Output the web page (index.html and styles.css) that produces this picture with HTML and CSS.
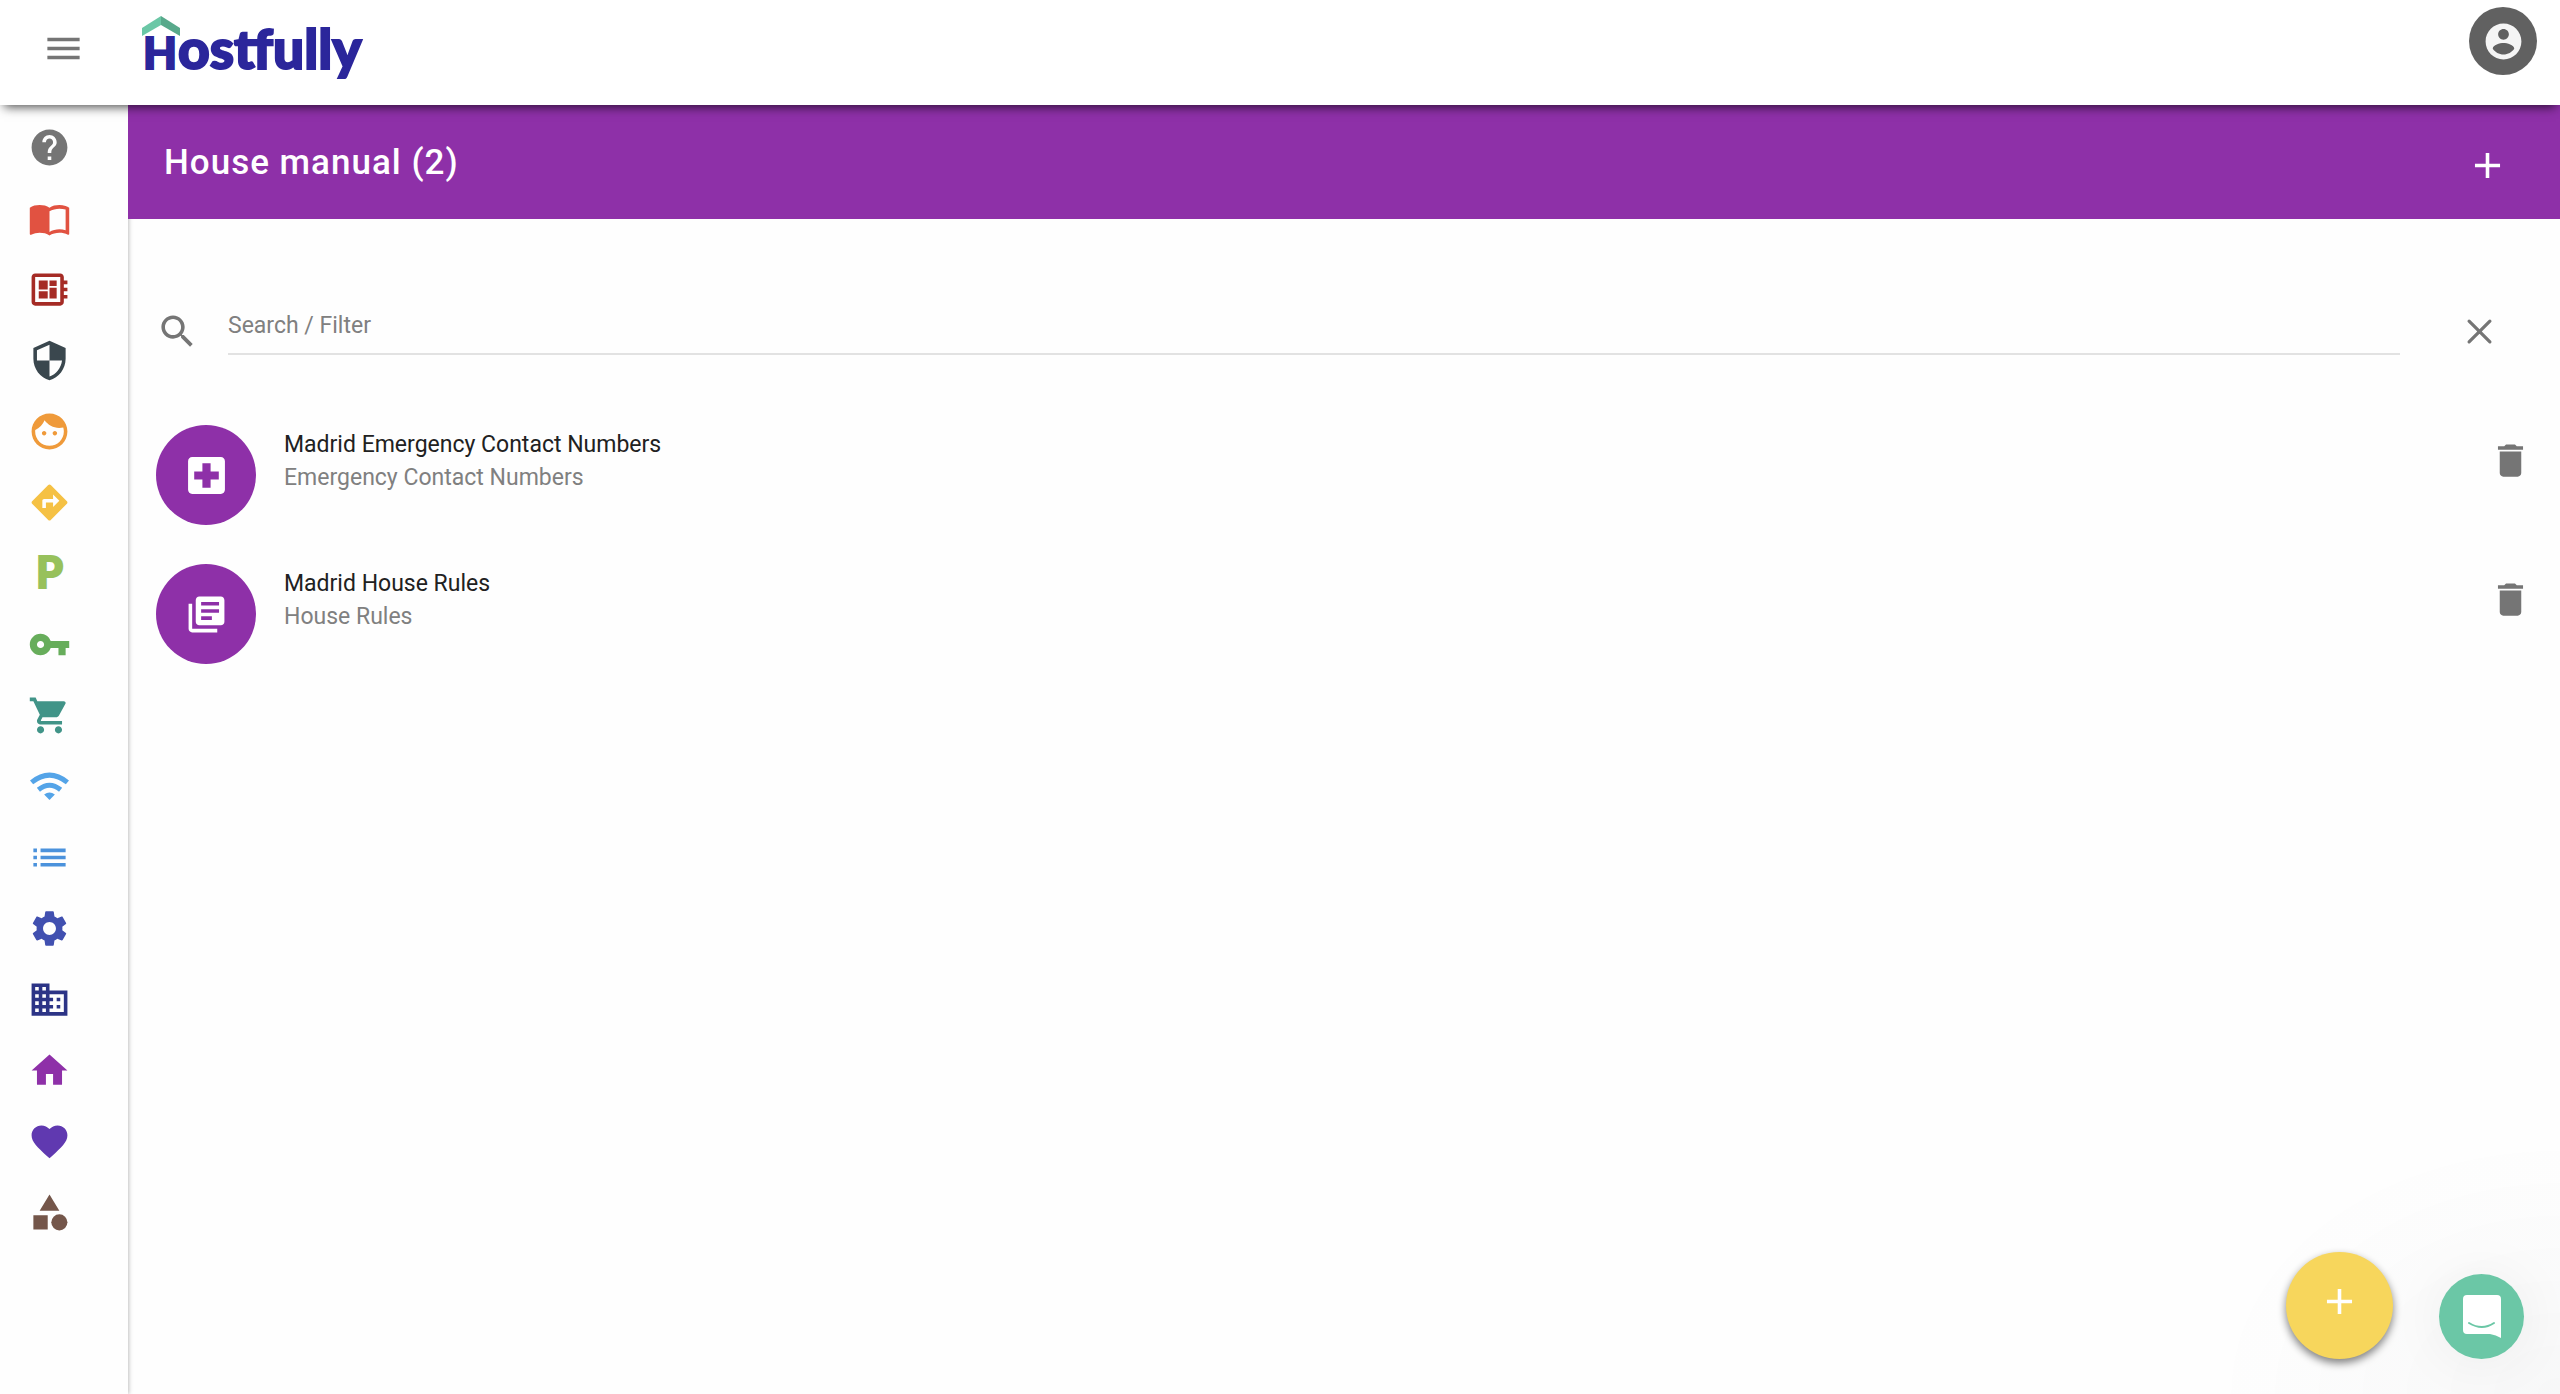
FILE: index.html
```html
<!DOCTYPE html>
<html lang="en">
<head>
  <meta charset="UTF-8">
  <meta name="viewport" content="width=device-width, initial-scale=1.0">
  <title>House manual - Hostfully</title>
  <link rel="stylesheet" href="styles.css">
</head>
<body>
  <header class="topbar">
    <button class="icon-btn menu-btn" aria-label="Menu">
      <svg class="icon" viewBox="0 0 24 24"><path d="M3 18h18v-2H3v2zm0-5h18v-2H3v2zm0-7v2h18V6H3z"/></svg>
    </button>
    <a class="logo" href="#" aria-label="Hostfully">
      <svg width="236" height="96" viewBox="0 0 236 96">
        <path fill="#6bc7a6" d="M0 28l19-12v9L0 36z"/>
        <path fill="#58a98b" d="M38 28L19 16v9l19 11z"/>
        <text class="logo-text" y="69"><tspan x="1" font-size="44">H</tspan><tspan x="36" font-size="55">ostfully</tspan></text>
      </svg>
    </a>
    <button class="avatar" aria-label="Account">
      <svg class="icon" viewBox="0 0 24 24"><path d="M12 2C6.48 2 2 6.48 2 12s4.48 10 10 10 10-4.48 10-10S17.52 2 12 2zm0 3c1.66 0 3 1.34 3 3s-1.34 3-3 3-3-1.34-3-3 1.34-3 3-3zm0 14.2c-2.5 0-4.71-1.28-6-3.22.03-1.99 4-3.08 6-3.08 1.99 0 5.97 1.09 6 3.08-1.29 1.94-3.5 3.22-6 3.22z"/></svg>
    </button>
  </header>

  <div class="layout">
    <nav class="sidebar">
      <a href="#" class="help" aria-label="Help"><svg class="icon" viewBox="0 0 24 24"><path d="M12 2C6.48 2 2 6.48 2 12s4.48 10 10 10 10-4.48 10-10S17.52 2 12 2zm1 17h-2v-2h2v2zm2.07-7.75l-.9.92C13.45 12.9 13 13.5 13 15h-2v-.5c0-1.1.45-2.1 1.17-2.83l1.24-1.26c.37-.36.59-.86.59-1.41 0-1.1-.9-2-2-2s-2 .9-2 2H8c0-2.21 1.79-4 4-4s4 1.79 4 4c0 .88-.36 1.68-.93 2.25z"/></svg></a>
      <a href="#" class="guide" aria-label="Guidebooks"><svg class="icon" viewBox="0 0 24 24"><path d="M21 5c-1.11-.35-2.33-.5-3.5-.5-1.95 0-4.05.4-5.5 1.5-1.45-1.1-3.55-1.5-5.5-1.5S2.45 4.9 1 6v14.65c0 .25.25.5.5.5.1 0 .15-.05.25-.05C3.1 20.45 5.05 20 6.5 20c1.95 0 4.05.4 5.5 1.5 1.35-.85 3.8-1.5 5.5-1.5 1.65 0 3.35.3 4.75 1.05.1.05.15.05.25.05.25 0 .5-.25.5-.5V6c-.6-.45-1.25-.75-2-1zm0 13.5c-1.1-.35-2.3-.5-3.5-.5-1.7 0-4.15.65-5.5 1.5V8c1.35-.85 3.8-1.5 5.5-1.5 1.2 0 2.4.15 3.5.5v11.5z"/></svg></a>
      <a href="#" class="board" aria-label="Dashboard"><svg class="icon" viewBox="0 0 24 24"><path d="M22 9V7h-2V5c0-1.1-.9-2-2-2H4c-1.1 0-2 .9-2 2v14c0 1.1.9 2 2 2h14c1.1 0 2-.9 2-2v-2h2v-2h-2v-2h2v-2h-2V9h2zm-4 10H4V5h14v14zM6 13h5v4H6zm6-6h4v3h-4zM6 7h5v5H6zm6 4h4v6h-4z"/></svg></a>
      <a href="#" class="safety" aria-label="Safety"><svg class="icon" viewBox="0 0 24 24"><path d="M12 1L3 5v6c0 5.55 3.84 10.74 9 12 5.16-1.26 9-6.45 9-12V5l-9-4zm0 10.99h7c-.53 4.12-3.28 7.79-7 8.94V12H5V6.3l7-3.11v8.8z"/></svg></a>
      <a href="#" class="host" aria-label="Host"><svg class="icon" viewBox="0 0 24 24"><path d="M9 11.75c-.69 0-1.25.56-1.25 1.25s.56 1.25 1.25 1.25 1.25-.56 1.25-1.25-.56-1.25-1.25-1.25zm6 0c-.69 0-1.25.56-1.25 1.25s.56 1.25 1.25 1.25 1.25-.56 1.25-1.25-.56-1.25-1.25-1.25zM12 2C6.48 2 2 6.48 2 12s4.48 10 10 10 10-4.48 10-10S17.52 2 12 2zm0 18c-4.41 0-8-3.59-8-8 0-.29.02-.58.05-.86 2.36-1.05 4.23-2.98 5.21-5.37C11.07 8.33 14.05 10 17.42 10c.78 0 1.53-.09 2.25-.26.21.71.33 1.47.33 2.26 0 4.41-3.59 8-8 8z"/></svg></a>
      <a href="#" class="directions" aria-label="Directions"><svg class="icon" viewBox="0 0 24 24"><path d="M21.71 11.29l-9-9c-.39-.39-1.02-.39-1.41 0l-9 9c-.39.39-.39 1.02 0 1.41l9 9c.39.39 1.02.39 1.41 0l9-9c.39-.38.39-1.01 0-1.41zM14 14.5V12h-4v3H8v-4c0-.55.45-1 1-1h5V7.5l3.5 3.5-3.5 3.5z"/></svg></a>
      <a href="#" class="parking" aria-label="Parking">P</a>
      <a href="#" class="checkin" aria-label="Check-in"><svg class="icon" viewBox="0 0 24 24"><path d="M12.65 10C11.83 7.67 9.61 6 7 6c-3.31 0-6 2.69-6 6s2.69 6 6 6c2.61 0 4.83-1.67 5.65-4H17v4h4v-4h2v-4H12.65zM7 14c-1.1 0-2-.9-2-2s.9-2 2-2 2 .9 2 2-.9 2-2 2z"/></svg></a>
      <a href="#" class="shop" aria-label="Marketplace"><svg class="icon" viewBox="0 0 24 24"><path d="M7 18c-1.1 0-1.99.9-1.99 2S5.9 22 7 22s2-.9 2-2-.9-2-2-2zM1 2v2h2l3.6 7.59-1.35 2.45c-.16.28-.25.61-.25.96 0 1.1.9 2 2 2h12v-2H7.42c-.14 0-.25-.11-.25-.25l.03-.12.9-1.63h7.45c.75 0 1.41-.41 1.75-1.03l3.58-6.49c.08-.14.12-.31.12-.48 0-.55-.45-1-1-1H5.21l-.94-2H1zm16 16c-1.1 0-1.99.9-1.99 2s.89 2 1.99 2 2-.9 2-2-.9-2-2-2z"/></svg></a>
      <a href="#" class="wifi" aria-label="Wifi"><svg class="icon" viewBox="0 0 24 24"><path fill="none" stroke="currentColor" stroke-width="2.8" d="M2 9.700Q12 1.600 22 9.700M5.800 13.800Q12 8.800 18.200 13.800"/><path d="M9 16.400Q12 14.200 15 16.400L12 19.500z"/></svg></a>
      <a href="#" class="list-link" aria-label="Lists"><svg class="icon" viewBox="0 0 24 24"><path d="M3 13h2v-2H3v2zm0 4h2v-2H3v2zm0-8h2V7H3v2zm4 4h14v-2H7v2zm0 4h14v-2H7v2zM7 7v2h14V7H7z"/></svg></a>
      <a href="#" class="settings" aria-label="Settings"><svg class="icon" viewBox="0 0 24 24"><path d="M19.14 12.94c.04-.3.06-.61.06-.94 0-.32-.02-.64-.07-.94l2.03-1.58c.18-.14.23-.41.12-.61l-1.92-3.32c-.12-.22-.37-.29-.59-.22l-2.39.96c-.5-.38-1.03-.7-1.62-.94l-.36-2.54c-.04-.24-.24-.41-.48-.41h-3.84c-.24 0-.43.17-.47.41l-.36 2.54c-.59.24-1.13.57-1.62.94l-2.39-.96c-.22-.08-.47 0-.59.22L2.74 8.87c-.12.21-.08.47.12.61l2.03 1.58c-.05.3-.09.63-.09.94s.02.64.07.94l-2.03 1.58c-.18.14-.23.41-.12.61l1.92 3.32c.12.22.37.29.59.22l2.39-.96c.5.38 1.03.7 1.62.94l.36 2.54c.05.24.24.41.48.41h3.84c.24 0 .44-.17.47-.41l.36-2.54c.59-.24 1.13-.56 1.62-.94l2.39.96c.22.08.47 0 .59-.22l1.92-3.32c.12-.22.07-.47-.12-.61l-2.01-1.58zM12 15.6c-1.98 0-3.6-1.62-3.6-3.6s1.62-3.6 3.6-3.6 3.6 1.62 3.6 3.6-1.62 3.6-3.6 3.6z"/></svg></a>
      <a href="#" class="business" aria-label="Properties"><svg class="icon" viewBox="0 0 24 24"><path d="M12 7V3H2v18h20V7H12zM6 19H4v-2h2v2zm0-4H4v-2h2v2zm0-4H4V9h2v2zm0-4H4V5h2v2zm4 12H8v-2h2v2zm0-4H8v-2h2v2zm0-4H8V9h2v2zm0-4H8V5h2v2zm10 12h-8v-2h2v-2h-2v-2h2v-2h-2V9h8v10zm-2-8h-2v2h2v-2zm0 4h-2v2h2v-2z"/></svg></a>
      <a href="#" class="home" aria-label="House manual"><svg class="icon" viewBox="0 0 24 24"><path d="M10 20v-6h4v6h5v-8h3L12 3 2 12h3v8z"/></svg></a>
      <a href="#" class="favorite" aria-label="Recommendations"><svg class="icon" viewBox="0 0 24 24"><path d="M12 21.35l-1.45-1.32C5.4 15.36 2 12.28 2 8.5 2 5.42 4.42 3 7.5 3c1.74 0 3.41.81 4.5 2.09C13.09 3.81 14.76 3 16.5 3 19.58 3 22 5.42 22 8.5c0 3.78-3.4 6.86-8.55 11.54L12 21.35z"/></svg></a>
      <a href="#" class="category" aria-label="Categories"><svg class="icon" viewBox="0 0 24 24"><path d="M12 2l-5.5 9h11zM3 13.5h8v8H3z"/><circle cx="17.5" cy="17.5" r="4.5"/></svg></a>
    </nav>

    <main class="content">
      <div class="titlebar">
        <h1>House manual (2)</h1>
        <button class="icon-btn" aria-label="Add">
          <svg class="icon" viewBox="0 0 24 24"><path d="M19 13h-6v6h-2v-6H5v-2h6V5h2v6h6v2z"/></svg>
        </button>
      </div>

      <form class="search">
        <label for="search" aria-label="Search">
          <svg class="icon" viewBox="0 0 24 24"><path d="M15.5 14h-.79l-.28-.27C15.41 12.59 16 11.11 16 9.5 16 5.91 13.09 3 9.5 3S3 5.91 3 9.5 5.91 16 9.5 16c1.61 0 3.09-.59 4.23-1.57l.27.28v.79l5 4.99L20.49 19l-4.99-5zm-6 0C7.01 14 5 11.99 5 9.5S7.01 5 9.5 5 14 7.01 14 9.5 11.99 14 9.5 14z"/></svg>
        </label>
        <input type="text" id="search" placeholder="Search / Filter">
        <button type="reset" class="icon-btn" aria-label="Clear">
          <svg class="icon" viewBox="0 0 24 24"><path fill="none" stroke="currentColor" stroke-width="1.8" stroke-linecap="round" d="M6.200 6.200l11.600 11.600M17.800 6.200L6.200 17.800"/></svg>
        </button>
      </form>

      <ul class="manual-list">
        <li class="manual">
          <div class="manual-icon">
            <svg class="icon" viewBox="1.5 1.5 21 21"><path d="M19 3H5c-1.1 0-2 .9-2 2v14c0 1.1.9 2 2 2h14c1.1 0 2-.9 2-2V5c0-1.1-.9-2-2-2zm-1 11h-4v4h-4v-4H6v-4h4V6h4v4h4v4z"/></svg>
          </div>
          <div class="manual-text">
            <h3>Madrid Emergency Contact Numbers</h3>
            <p>Emergency Contact Numbers</p>
          </div>
          <button class="icon-btn" aria-label="Delete Madrid Emergency Contact Numbers">
            <svg class="icon" viewBox="0 0 24 24"><path d="M6 19c0 1.1.9 2 2 2h8c1.1 0 2-.9 2-2V7H6v12zM19 4h-3.5l-1-1h-5l-1 1H5v2h14V4z"/></svg>
          </button>
        </li>
        <li class="manual">
          <div class="manual-icon">
            <svg class="icon" viewBox="0 0 24 24"><path d="M4 6H2v14c0 1.1.9 2 2 2h14v-2H4V6zm16-4H8c-1.1 0-2 .9-2 2v12c0 1.1.9 2 2 2h12c1.1 0 2-.9 2-2V4c0-1.1-.9-2-2-2zm-1 9H9V9h10v2zm-4 4H9v-2h6v2zm4-8H9V5h10v2z"/></svg>
          </div>
          <div class="manual-text">
            <h3>Madrid House Rules</h3>
            <p>House Rules</p>
          </div>
          <button class="icon-btn" aria-label="Delete Madrid House Rules">
            <svg class="icon" viewBox="0 0 24 24"><path d="M6 19c0 1.1.9 2 2 2h8c1.1 0 2-.9 2-2V7H6v12zM19 4h-3.5l-1-1h-5l-1 1H5v2h14V4z"/></svg>
          </button>
        </li>
      </ul>
    </main>
  </div>

  <div class="floating">
    <button class="fab" aria-label="Add item">
      <svg class="icon" viewBox="0 0 24 24"><path d="M19 13h-6v6h-2v-6H5v-2h6V5h2v6h6v2z"/></svg>
    </button>
    <button class="chat" aria-label="Open chat">
      <svg width="38" height="44" viewBox="0 0 38 44">
        <path fill="#fff" d="M4 0h30q4 0 4 4v39q-5-3-11-4H4q-4 0-4-4V4q0-4 4-4z"/>
        <path fill="none" stroke="#6bc7a6" stroke-width="2" stroke-linecap="round" d="M6 28q13 8 25 0"/>
      </svg>
    </button>
  </div>
</body>
</html>
```
FILE: styles.css
```css
* {
  box-sizing: border-box;
}
body {
  display: flex;
  flex-direction: column;
  min-height: 100vh;
  margin: 0;
  font-family: Roboto, sans-serif;
  font-size: 23px;
  color: #212121;
  background-color: #fefefe;
}
button {
  padding: 0;
  border: none;
  background: none;
  cursor: pointer;
}
.icon {
  display: block;
  width: 43px;
  height: 43px;
  fill: currentColor;
}
.icon-btn {
  color: #757575;
}

/* Top bar */
.topbar {
  position: relative;
  z-index: 2;
  display: flex;
  align-items: flex-start;
  height: 105px;
  padding: 0 23px 0 42px;
  background-color: #fff;
  box-shadow: 0 6px 10px -4px rgba(0, 0, 0, 0.7);
}
.menu-btn {
  margin-top: 27px;
}
.logo {
  margin-left: 57px;
}
.logo-text {
  font-family: Lato, sans-serif;
  font-weight: 900;
  fill: #2b269b;
  stroke: #2b269b;
  stroke-width: 2px;
}
.avatar {
  display: flex;
  align-items: center;
  justify-content: center;
  width: 68px;
  height: 68px;
  margin: 7px 0 0 auto;
  border-radius: 50%;
  color: #f5f5f5;
  background-color: #616161;
}

/* Sidebar */
.layout {
  display: flex;
  flex: 1;
}
.sidebar {
  width: 128px;
  padding-top: 7px;
  box-shadow: 1px 0 4px rgba(0, 0, 0, 0.25);
}
.sidebar a {
  display: flex;
  align-items: center;
  justify-content: center;
  width: 99px;
  height: 71px;
  text-decoration: none;
}
.help { color: #757575; }
.guide { color: #e15241; }
.board { color: #a52b25; }
.safety { color: #3a474e; }
.host { color: #ef9a3a; }
.directions { color: #f5c144; }
.sidebar .parking {
  font-family: Lato, sans-serif;
  font-size: 43px;
  font-weight: 900;
  line-height: 68px;
  align-items: flex-start;
  color: #97c15c;
  -webkit-text-stroke: 2px #97c15c;
}
.checkin { color: #67ad5b; }
.shop { color: #419488; }
.wifi { color: #54a4e8; }
.list-link { color: #4b92dc; }
.settings { color: #4150b0; }
.business { color: #2c3486; }
.home { color: #8e30a8; }
.favorite { color: #6039b0; }
.category { color: #74564a; }

/* Content */
.content {
  position: relative;
  flex: 1;
}
.titlebar {
  display: flex;
  align-items: center;
  justify-content: space-between;
  height: 114px;
  padding: 0 51px 0 36px;
  color: #fff;
  background-color: #8e30a8;
}
.titlebar h1 {
  margin: 0;
  font-size: 35px;
  font-weight: 500;
  letter-spacing: 1px;
}
.titlebar .icon-btn {
  margin-top: 6px;
  color: #fff;
}
.search {
  display: flex;
  align-items: flex-end;
  padding: 76px 59px 0 28px;
  color: #757575;
}
.search .icon {
  margin-bottom: 2px;
}
.search input {
  flex: 1;
  height: 60px;
  margin: 0 58px 0 29px;
  padding: 2px 0 0;
  border: none;
  border-bottom: 2px solid #e2e2e2;
  outline: none;
  font: inherit;
  background: none;
}
.search input::placeholder {
  color: #808080;
  opacity: 1;
}

/* Manual list */
.manual-list {
  display: flex;
  flex-direction: column;
  gap: 39px;
  margin: 0;
  padding: 70px 28px 0;
  list-style: none;
}
.manual {
  display: flex;
  align-items: flex-start;
  gap: 28px;
}
.manual-icon {
  display: flex;
  align-items: center;
  justify-content: center;
  width: 100px;
  height: 100px;
  border-radius: 50%;
  color: #fff;
  background-color: #8e30a8;
}
.manual-text {
  flex: 1;
  padding-top: 3px;
  line-height: 33px;
}
.manual-text h3 {
  margin: 0;
  font-size: 23px;
  font-weight: 400;
}
.manual-text p {
  margin: 0;
  color: #808080;
}
.manual .icon-btn {
  margin-top: 14px;
}

/* Floating buttons */
.floating {
  position: fixed;
  right: 0;
  bottom: 0;
  z-index: 3;
  display: flex;
  align-items: flex-end;
  gap: 46px;
  padding: 120px 36px 35px 80px;
  background: radial-gradient(ellipse at bottom right, rgba(29, 39, 54, 0.03) 0, rgba(29, 39, 54, 0) 70%);
}
.fab {
  display: flex;
  justify-content: center;
  width: 107px;
  height: 107px;
  padding-top: 28px;
  border-radius: 50%;
  color: #fff;
  background-color: #f7d65c;
  box-shadow: 0 4px 9px rgba(0, 0, 0, 0.5);
}
.chat {
  display: flex;
  align-items: center;
  justify-content: center;
  width: 85px;
  height: 85px;
  border-radius: 50%;
  background-color: #6bc7a6;
  box-shadow: 0 2px 60px rgba(0, 0, 0, 0.06);
}
```
